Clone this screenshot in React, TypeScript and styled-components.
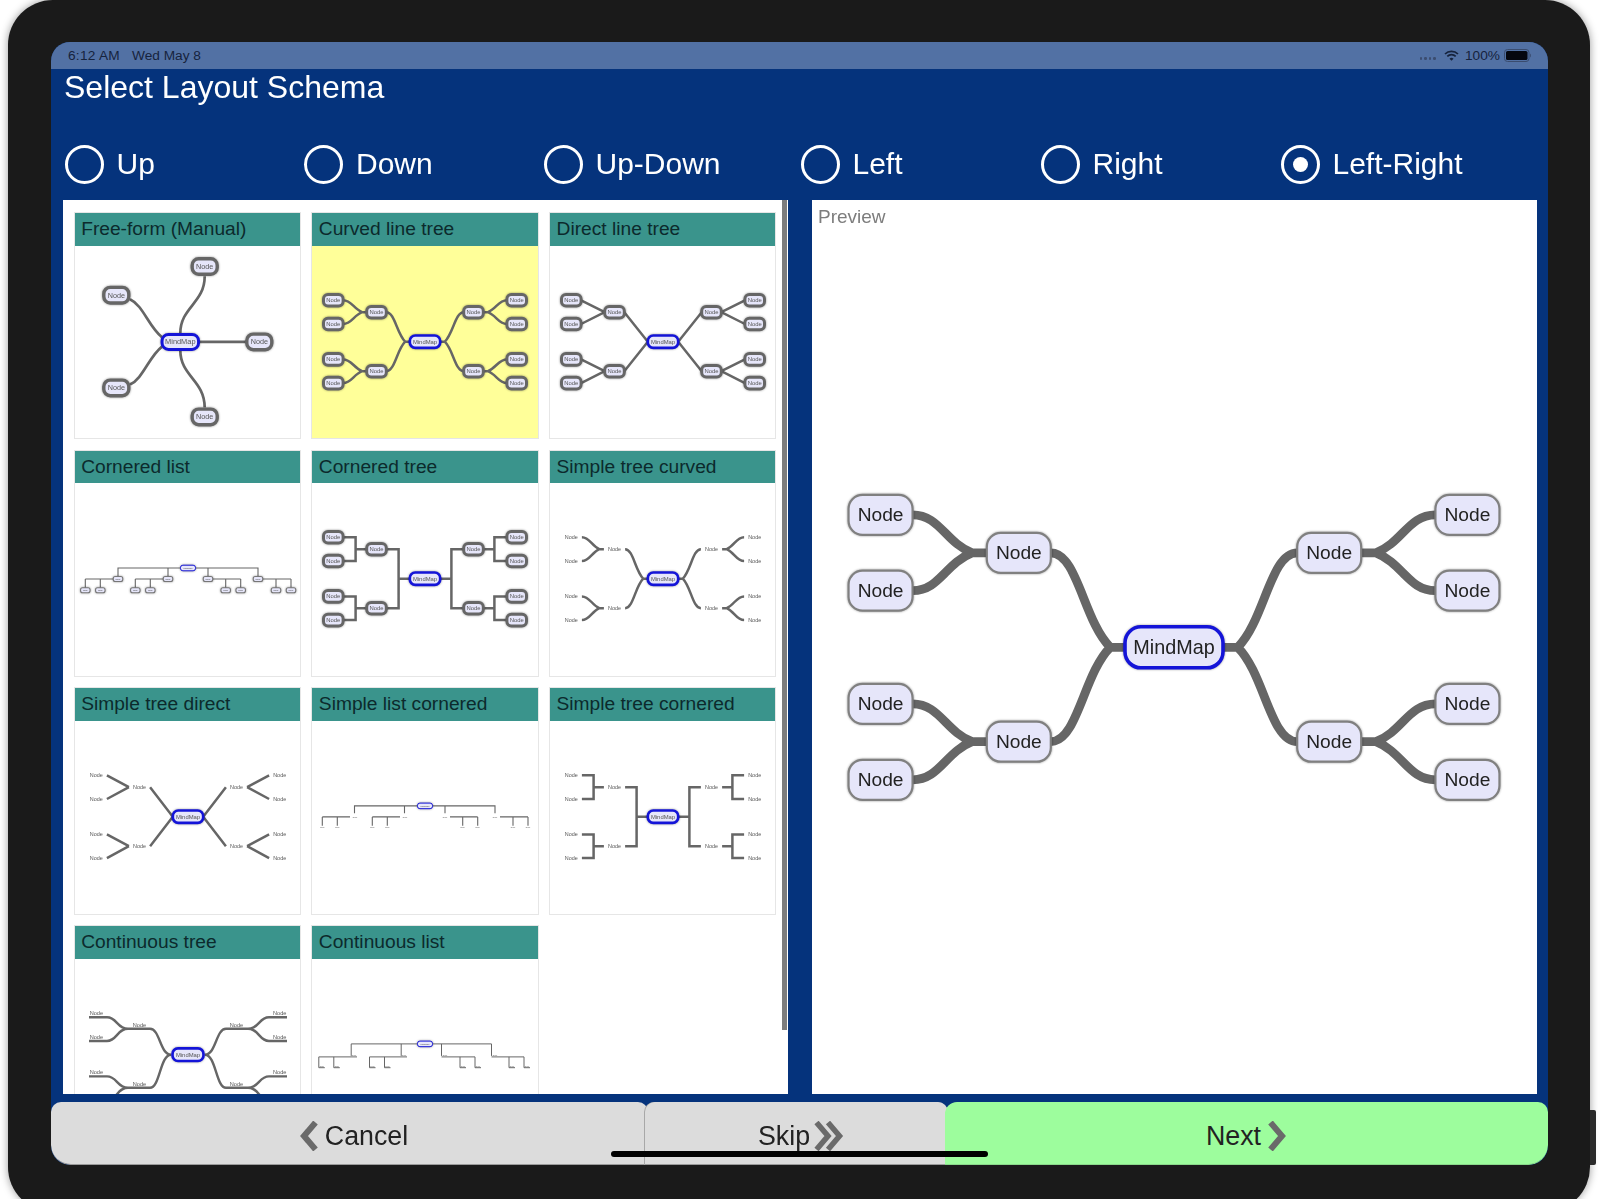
import React from 'react';
import styled, { createGlobalStyle } from 'styled-components';

const Global = createGlobalStyle`
  html, body { margin: 0; padding: 0; background: #fff; }
  body { font-family: "Liberation Sans", Arial, sans-serif; }
`;

const Page = styled.div`
  width: 1600px; height: 1199px; overflow: hidden; background: #fff; padding-left: 8px; box-sizing: border-box; display: flex;
`;
const Device = styled.div`
  width: 1582px; height: 1212px; box-sizing: border-box; flex: none;
  background: #1a1a1a; border-radius: 45px; padding: 42px 42px 0 43px;
  box-shadow: 0 0 8px rgba(0,0,0,.4);
`;
const SideButton = styled.div`
  width: 6px; height: 55px; flex: none; background: #2a2a2a; margin-top: 1110px; border-radius: 0 2px 2px 0;
`;
const Screen = styled.div`
  position: relative; width: 1497px; height: 1123px; background: #05337c; border-radius: 19px; overflow: hidden;
  display: flex; flex-direction: column; filter: blur(0.55px);
`;
const StatusBar = styled.div`
  height: 27px; flex: none; background: #5271a4; color: #16233d; font-size: 13.7px; display: flex; align-items: center; padding: 0 16px 0 17px;
`;
const Clock = styled.span` width: 64px; letter-spacing: 0.25px; `;
const StatusRight = styled.div` margin-left: auto; display: flex; align-items: center; `;
const Dots = styled.span` display: flex; gap: 2px; margin-right: 8px; margin-top: 6px; `;
const Dot = styled.i` width: 2.6px; height: 2.6px; border-radius: 50%; background: #3b4d70; `;
const Percent = styled.span` margin: 0 4px 0 6px; `;
const Title = styled.h1`
  margin: 0; height: 67px; flex: none; padding-left: 13px; font-weight: 400; font-size: 32px; line-height: 37px; color: #fff;
`;
const RadioRow = styled.div`
  display: grid; flex: none; height: 56px; padding-left: 13.5px;
  grid-template-columns: 239.5px 239.5px 257px 240px 240px auto; align-items: center;
`;
const RadioItem = styled.label`
  display: flex; align-items: center; gap: 13px; color: #fff; font-size: 30px;
`;
const RadioDot = styled.span<{ $on?: boolean }>`
  width: 39px; height: 39px; box-sizing: border-box; border: 3px solid #fff; border-radius: 50%; display: flex; align-items: center; justify-content: center;
  &::after { content: ''; width: 15px; height: 15px; border-radius: 50%; background: ${p => (p.$on ? '#fff' : 'transparent')}; }
`;
const Panels = styled.div`
  display: flex; height: 894px; flex: none; margin-top: 8px; padding-left: 12px; gap: 24px;
`;
const ListPanel = styled.div`
  width: 725px; background: #fff; display: flex; overflow: hidden;
`;
const CardScroller = styled.div`
  flex: 1; overflow: hidden; padding: 12px 0 0 10.67px;
  display: grid; grid-template-columns: repeat(3, 227.3px); grid-auto-rows: 227.3px; column-gap: 10.4px; row-gap: 10.4px; align-content: start;
`;
const ScrollThumb = styled.div`
  width: 5px; height: 830px; background: #7d7d7d; flex: none; margin-right: 1px;
`;
const Card = styled.div`
  border: 1px solid #e6e6e6; background: #fff; display: flex; flex-direction: column; overflow: hidden;
`;
const CardHeader = styled.div`
  height: 32.5px; flex: none; background: #3a948c; color: #0c2a2c; font-size: 19.2px; line-height: 32px; padding-left: 6.5px;
`;
const CardBody = styled.div<{ $sel?: boolean }>`
  flex: 1; background: ${p => (p.$sel ? '#ffff99' : '#fff')};
`;
const PreviewPanel = styled.div`
  width: 725px; background: #fff; display: grid;
`;
const PreviewLabel = styled.div`
  grid-area: 1 / 1; color: #7d7d7d; font-size: 19px; padding: 6px 0 0 6px;
`;
const PreviewCanvas = styled.svg`
  grid-area: 1 / 1; display: block;
`;
const Thumb = styled.svg`
  display: block; width: 226px; height: 193px; filter: blur(0.3px);
`;
const NodeRect = styled.rect`
  filter: drop-shadow(0 0.8px 1px rgba(0,0,0,.4));
`;
const NodeText = styled.text`
  font-family: "Liberation Sans", Arial, sans-serif; text-anchor: middle; dominant-baseline: central;
`;
const ButtonBar = styled.div`
  display: flex; height: 63px; flex: none; margin-top: 8px;
`;
const BarButton = styled.button<{ $w: number; $kind: 'cancel' | 'skip' | 'next' }>`
  width: ${p => p.$w}px; flex: none; height: 63px; border: 0; margin: 0; cursor: pointer;
  font: 400 26.8px "Liberation Sans", Arial, sans-serif; color: #222;
  display: flex; align-items: center; justify-content: center; gap: ${p => (p.$kind === 'skip' ? 4 : 7)}px;
  background: ${p => (p.$kind === 'next' ? '#9dfd9d' : '#dcdcdc')};
  border-bottom: 1px solid ${p => (p.$kind === 'next' ? '#8ad98a' : '#9a9a9a')};
  box-sizing: border-box;
  padding: 6px 0 0 ${p => (p.$kind === 'next' ? 0 : p.$kind === 'skip' ? 9 : 8)}px;
  border-radius: ${p => (p.$kind === 'cancel' ? '10px 10px 0 20px' : p.$kind === 'skip' ? '10px 10px 0 0' : '12px 10px 20px 0')};
  margin-left: ${p => (p.$kind === 'cancel' ? 0 : -3)}px;
  ${p => (p.$kind === 'skip' ? 'box-shadow: -1px 0 0 #a8a8a8;' : '')}
`;
const HomeBar = styled.div`
  position: absolute; left: 560px; bottom: 8px; width: 377px; height: 6px; border-radius: 3px; background: #000;
`;

const GRAY = '#666';
const BLUE = '#1414d8';
const FILL = '#e6e6fa';

type NodeProps = { x: number; y: number; w: number; h: number; r: number; label: string; fs: number; sw: number; stroke: string; color?: string; };
const MapNode = ({ x, y, w, h, r, label, fs, sw, stroke, color = '#444' }: NodeProps) => (
  <g>
    <NodeRect x={x - w / 2} y={y - h / 2} width={w} height={h} rx={r} fill={FILL} stroke={stroke} strokeWidth={sw} />
    <NodeText x={x} y={y} fontSize={fs} fill={color}>{label}</NodeText>
  </g>
);
const Plain = ({ x, y, fs, label }: { x: number; y: number; fs: number; label: string }) => (
  <NodeText x={x} y={y} fontSize={fs} fill="#555">{label}</NodeText>
);

type TreeKind = 'curved' | 'direct' | 'cornered';
type Geo = { k: number; nw: number; nh: number; nr: number; nsw: number; rw: number; rh: number; rr: number; rsw: number; line: number; fs: number; rfs: number; nodeStroke: string; textColor: string };
const L1X = 48.5, L2X = 91.7, L1Y = 29.5, L2A = 41.4, L2B = 17.7;

function treeEdges(kind: TreeKind, g: Geo) {
  const { k, nw, rw } = g;
  const out: string[] = [];
  const stub = 4.6 * k;
  const link = (x0: number, y0: number, x1: number, y1: number, vx: number) => {
    if (kind === 'direct') return `M${x0} ${y0}L${x1} ${y1}`;
    if (kind === 'cornered') return `M${x0} ${y0}H${vx}V${y1}H${x1}`;
    const dir = x1 > x0 ? 1 : -1;
    const xs = x1 - dir * stub;
    const d = xs - x0;
    const dy = y1 - y0;
    return `M${x0} ${y0}C${x0 + d * 0.45} ${y0} ${x0 + d * 0.55} ${y0 + dy * 0.72} ${xs} ${y1}L${x1} ${y1}`;
  };
  for (const sx of [-1, 1]) for (const sy of [-1, 1]) {
    const ly = sy * L1Y * k;
    out.push(link(sx * (L1X * k - nw), ly, sx * rw, 0, sx * 26.4 * k));
    for (const d of [L2A, L2B]) {
      out.push(link(sx * (L2X * k - nw), sy * d * k, sx * (L1X * k + nw), ly, sx * 69.4 * k));
    }
  }
  return out;
}

const Tree = ({ kind, g, plain }: { kind: TreeKind; g: Geo; plain?: boolean }) => {
  const { k } = g;
  const nodes: { x: number; y: number }[] = [];
  for (const sx of [-1, 1]) for (const sy of [-1, 1]) {
    nodes.push({ x: sx * L1X * k, y: sy * L1Y * k }, { x: sx * L2X * k, y: sy * L2A * k }, { x: sx * L2X * k, y: sy * L2B * k });
  }
  return (
    <g>
      <path d={treeEdges(kind, g).join('')} fill="none" stroke={GRAY} strokeWidth={g.line} strokeLinejoin="miter" />
      {nodes.map((n, i) =>
        plain
          ? <Plain key={i} x={n.x} y={n.y} fs={g.fs * 0.92} label="Node" />
          : <MapNode key={i} x={n.x} y={n.y} w={g.nw * 2} h={g.nh * 2} r={g.nr} sw={g.nsw} stroke={g.nodeStroke} label="Node" fs={g.fs} color={g.textColor} />
      )}
      <MapNode x={0} y={0} w={g.rw * 2} h={g.rh * 2} r={g.rr} sw={g.rsw} stroke={BLUE} label="MindMap" fs={g.rfs} color={g.textColor} />
    </g>
  );
};

const thumbGeo: Geo = { k: 1, nw: 9.8, nh: 5.8, nr: 4.5, nsw: 3, rw: 15.2, rh: 6.2, rr: 5.5, rsw: 2.7, line: 2.5, fs: 5.9, rfs: 5.9, nodeStroke: '#666', textColor: '#555' };
const plainGeo: Geo = { ...thumbGeo, nw: 10.6 };
const bigGeo: Geo = { k: 3.2, nw: 32, nh: 20, nr: 14, nsw: 2.2, rw: 49, rh: 20.5, rr: 16, rsw: 3.6, line: 8.8, fs: 19.2, rfs: 19.8, nodeStroke: '#808080', textColor: '#222' };

const TreeThumb = ({ kind, plain }: { kind: TreeKind; plain?: boolean }) => (
  <Thumb viewBox="-113 -95.7 226 193"><Tree kind={kind} g={plain ? plainGeo : thumbGeo} plain={plain} /></Thumb>
);

const FreeThumb = () => (
  <Thumb viewBox="0 0.8 226 193">
    <path
      d="M105.3 88C105.3 62 129.7 58 129.7 31M55 54C68 60 74 82 87 92M55 139.4C68 133.4 74 111.4 87 101.4M105.3 105C105.3 131 129.7 135 129.7 162.4M124 96.7H172"
      fill="none" stroke={GRAY} strokeWidth={2.7}
    />
    {[[129.7, 21.3], [41.3, 50], [184.3, 96.7], [41.3, 142.7], [129.7, 171.7]].map(([x, y], i) => (
      <MapNode key={i} x={x} y={y} w={25} h={15.6} r={6.5} sw={3.4} stroke="#666" label="Node" fs={7.2} color="#555" />
    ))}
    <MapNode x={105.3} y={96.7} w={36.5} h={15} r={6.5} sw={3} stroke={BLUE} label="MindMap" fs={7.4} color="#555" />
  </Thumb>
);

const LIST = [
  { x: 43, far: 10.3, leaves: [10.3, 25.3] },
  { x: 93, far: 60.3, leaves: [60.3, 75.3] },
  { x: 133, far: 165.7, leaves: [150.7, 165.7] },
  { x: 183, far: 216, leaves: [201, 216] },
];

const CorneredListThumb = () => {
  const d = 'M43 96V85H183V96M93 85V96M133 85V96' + LIST.map(l => `M${l.x} 96H${l.far}` + l.leaves.map(v => `M${v} 96V107`).join('')).join('');
  return (
    <Thumb viewBox="0 0 226 193">
      <path d={d} fill="none" stroke={GRAY} strokeWidth={1.1} />
      {LIST.map(l => <MapNode key={l.x} x={l.x} y={96} w={9.5} h={5} r={2} sw={1.1} stroke="#777" label="Node" fs={2} />)}
      {LIST.flatMap(l => l.leaves).map(v => <MapNode key={v} x={v} y={107.3} w={9.5} h={5} r={2} sw={1.1} stroke="#777" label="Node" fs={2} />)}
      <MapNode x={113} y={85} w={15} h={5.6} r={2.4} sw={1} stroke={BLUE} label="MindMap" fs={2.2} />
    </Thumb>
  );
};

const SimpleListThumb = () => {
  const d = 'M42.5 93V85.7H183V93M92.5 85.7V93M133 85.7V93' +
    'M38 96.7H10.3M88 96.7H60.3M138 96.7H165.7M188 96.7H216' +
    LIST.flatMap(l => l.leaves).map(v => `M${v} 96.7V105.5`).join('');
  return (
    <Thumb viewBox="0 0.8 226 193">
      <path d={d} fill="none" stroke={GRAY} strokeWidth={1.1} />
      {LIST.map(l => <Plain key={l.x} x={l.x} y={96.7} fs={1.8} label="Node" />)}
      {LIST.flatMap(l => l.leaves).map(v => <Plain key={v} x={v} y={107} fs={1.8} label="Node" />)}
      <MapNode x={113} y={85.7} w={15} h={5.6} r={2.4} sw={1} stroke={BLUE} label="MindMap" fs={2.2} />
    </Thumb>
  );
};

const ContListThumb = () => {
  const d = 'M39.2 97.7V85.7H179.5V97.7M89.2 85.7V97.7M129.5 85.7V97.7' +
    'M45 98.7H6.8M95 98.7H57.5M129.5 98.7H163M179.5 98.7H212' +
    [6.8, 21.8, 57.5, 72.5, 148, 163, 197, 212].map(v => `M${v} 98.7V109.5H${v + 6}`).join('');
  return (
    <Thumb viewBox="0 0.8 226 193">
      <path d={d} fill="none" stroke={GRAY} strokeWidth={1} />
      {[42, 92, 133, 183].map(x => <Plain key={x} x={x} y={96.7} fs={1.8} label="Node" />)}
      {[6.8, 21.8, 57.5, 72.5, 148, 163, 197, 212].map(v => <Plain key={v} x={v + 3} y={108} fs={1.8} label="Node" />)}
      <MapNode x={113} y={85.7} w={15} h={5.6} r={2.4} sw={1} stroke={BLUE} label="MindMap" fs={2.2} />
    </Thumb>
  );
};

const ContTreeThumb = () => {
  const parts: string[] = [];
  const nodes: [number, number][] = [];
  for (const sx of [-1, 1]) for (const sy of [-1, 1]) {
    const l = sy * L1Y + 3.6;
    nodes.push([sx * L1X, sy * L1Y]);
    parts.push(`M${sx * 60} ${l}H${sx * 38}C${sx * 28} ${l} ${sx * 28} 0 ${sx * 17} 0`);
    for (const d of [L2A, L2B]) {
      const y = sy * d;
      nodes.push([sx * L2X, y]);
      parts.push(`M${sx * 99} ${y + 4}H${sx * 81}C${sx * 71} ${y + 4} ${sx * 71} ${l} ${sx * 60} ${l}`);
    }
  }
  return (
    <Thumb viewBox="-113 -95.7 226 193">
      <path d={parts.join('')} fill="none" stroke={GRAY} strokeWidth={2.4} />
      {nodes.map(([x, y], i) => <Plain key={i} x={x} y={y} fs={5.6} label="Node" />)}
      <MapNode x={0} y={0} w={31} h={12.6} r={5.5} sw={2.7} stroke={BLUE} label="MindMap" fs={5.9} color="#555" />
    </Thumb>
  );
};

const CARDS: { title: string; art: React.ReactNode; sel?: boolean }[] = [
  { title: 'Free-form (Manual)', art: <FreeThumb /> },
  { title: 'Curved line tree', art: <TreeThumb kind="curved" />, sel: true },
  { title: 'Direct line tree', art: <TreeThumb kind="direct" /> },
  { title: 'Cornered list', art: <CorneredListThumb /> },
  { title: 'Cornered tree', art: <TreeThumb kind="cornered" /> },
  { title: 'Simple tree curved', art: <TreeThumb kind="curved" plain /> },
  { title: 'Simple tree direct', art: <TreeThumb kind="direct" plain /> },
  { title: 'Simple list cornered', art: <SimpleListThumb /> },
  { title: 'Simple tree cornered', art: <TreeThumb kind="cornered" plain /> },
  { title: 'Continuous tree', art: <ContTreeThumb /> },
  { title: 'Continuous list', art: <ContListThumb /> },
];

const RADIOS = ['Up', 'Down', 'Up-Down', 'Left', 'Right', 'Left-Right'];

const Chevron = ({ dir }: { dir: 'left' | 'right' }) => (
  <svg width="19" height="30" viewBox="0 0 19 30">
    <path d={dir === 'left' ? 'M16.5 1.5L5 15L16.5 28.5' : 'M2.5 1.5L14 15L2.5 28.5'} fill="none" stroke="#6a6a6a" strokeWidth="6" />
  </svg>
);
const DoubleChevron = () => (
  <svg width="30" height="30" viewBox="0 0 30 30">
    <path d="M2.5 1.5L14 15L2.5 28.5M14 1.5L25.5 15L14 28.5" fill="none" stroke="#6a6a6a" strokeWidth="5.5" />
  </svg>
);
const Wifi = () => (
  <svg width="15" height="11" viewBox="0 0 15 11" fill="none" stroke="#16233d">
    <path d="M1 4A9.2 9.2 0 0 1 14 4" strokeWidth="1.7" />
    <path d="M3.3 6.4A5.9 5.9 0 0 1 11.7 6.4" strokeWidth="1.7" />
    <path d="M7.5 10.8L5.5 8.7A2.8 2.8 0 0 1 9.5 8.7Z" fill="#16233d" stroke="none" />
  </svg>
);
const Battery = () => (
  <svg width="28" height="13" viewBox="0 0 28 13">
    <rect x="0.5" y="0.5" width="24.5" height="12" rx="3" fill="none" stroke="#3a4c6e" />
    <rect x="2" y="2" width="21.5" height="9" rx="1.6" fill="#05070f" />
    <path d="M26 4.5C27.2 5 27.2 8 26 8.5Z" fill="#3a4c6e" />
  </svg>
);

export default function App() {
  return (
    <Page>
      <Global />
      <Device>
        <Screen>
          <StatusBar>
            <Clock>6:12 AM</Clock>
            <span>Wed May 8</span>
            <StatusRight>
              <Dots><Dot /><Dot /><Dot /><Dot /></Dots>
              <Wifi />
              <Percent>100%</Percent>
              <Battery />
            </StatusRight>
          </StatusBar>
          <Title>Select Layout Schema</Title>
          <RadioRow>
            {RADIOS.map(r => (
              <RadioItem key={r}>
                <RadioDot $on={r === 'Left-Right'} />
                {r}
              </RadioItem>
            ))}
          </RadioRow>
          <Panels>
            <ListPanel>
              <CardScroller>
                {CARDS.map(c => (
                  <Card key={c.title}>
                    <CardHeader>{c.title}</CardHeader>
                    <CardBody $sel={c.sel}>{c.art}</CardBody>
                  </Card>
                ))}
              </CardScroller>
              <ScrollThumb />
            </ListPanel>
            <PreviewPanel>
              <PreviewCanvas width="725" height="894" viewBox="-362 -447.3 725 894">
                <Tree kind="curved" g={bigGeo} />
              </PreviewCanvas>
              <PreviewLabel>Preview</PreviewLabel>
            </PreviewPanel>
          </Panels>
          <ButtonBar>
            <BarButton $w={597} $kind="cancel"><Chevron dir="left" />Cancel</BarButton>
            <BarButton $w={303} $kind="skip">Skip<DoubleChevron /></BarButton>
            <BarButton $w={603} $kind="next">Next<Chevron dir="right" /></BarButton>
          </ButtonBar>
          <HomeBar />
        </Screen>
      </Device>
      <SideButton />
    </Page>
  );
}
